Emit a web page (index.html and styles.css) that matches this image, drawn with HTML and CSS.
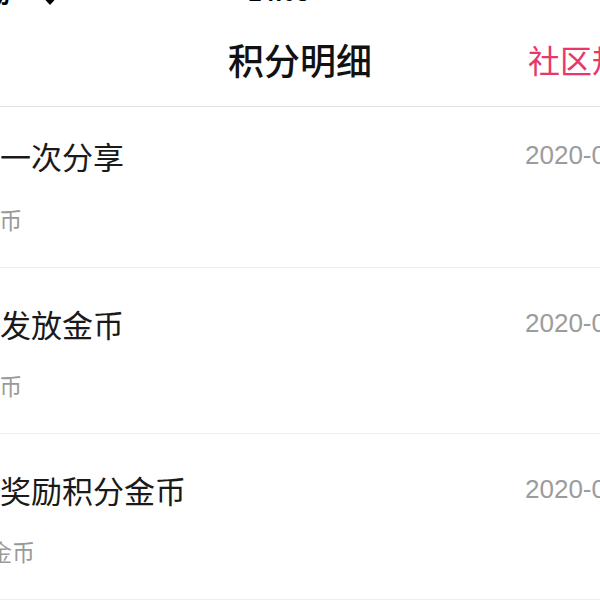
FILE: index.html
```html
<!DOCTYPE html>
<html lang="zh-CN">
<head>
    <meta charset="UTF-8">
    <meta name="viewport" content="width=device-width, initial-scale=1.0">
    <title>积分明细</title>
    <link rel="stylesheet" href="styles.css">
</head>
<body>
    <!-- Barra de estado -->
    <div class="status-bar">
        <span class="carrier">中国移动</span>
        <svg class="wifi" width="20" height="16" viewBox="0 0 20 16">
            <path d="M0 5 A14 14 0 0 1 20 5 L10 16 Z" fill="#000"/>
        </svg>
        <span class="time">14:08</span>
    </div>

    <header class="nav">
        <div></div>
        <h1>积分明细</h1>
        <a class="nav-link" href="#">社区规则</a>
    </header>

    <ul class="records">
        <li class="record">
            <div class="record-info">
                <p class="record-title">完成一次分享</p>
                <p class="record-amount">+10金币</p>
            </div>
            <span class="record-date">2020-06-18</span>
        </li>
        <li class="record">
            <div class="record-info">
                <p class="record-title">系统发放金币</p>
                <p class="record-amount">+10金币</p>
            </div>
            <span class="record-date">2020-06-17</span>
        </li>
        <li class="record">
            <div class="record-info">
                <p class="record-title">签到奖励积分金币</p>
                <p class="record-amount">+100金币</p>
            </div>
            <span class="record-date">2020-06-16</span>
        </li>
    </ul>
</body>
</html>
```

FILE: styles.css
```css
/* General */
body {
    font-family: "Noto Sans CJK SC", "Noto Sans", sans-serif;
    margin: 0;
    padding: 0;
    background: #fff;
    color: #1a1a1a;
    overflow: hidden;
}

/* Barra de estado (casi fuera de la imagen) */
.status-bar {
    display: flex;
    align-items: flex-end;
    height: 30px;
    margin-top: -25px;
    font-size: 24px;
    line-height: 1;
    font-weight: bold;
    color: #000;
}

.carrier {
    margin-left: -86px;
    white-space: nowrap;
}

.wifi {
    margin-left: 30px;
}

.time {
    margin-left: 188px;
    font-family: "Liberation Sans", sans-serif;
}

/* Navegación */
.nav {
    display: grid;
    grid-template-columns: minmax(0, 1fr) auto minmax(0, 1fr);
    align-items: center;
    height: 102px;
    box-sizing: border-box;
    padding-top: 6px;
    border-bottom: 1px solid #e2e2e2;
}

.nav h1 {
    margin: 0;
    font-size: 36px;
    line-height: 1;
    font-weight: 500;
    color: #111;
}

.nav-link {
    justify-self: start;
    margin-left: 156px;
    font-size: 32px;
    line-height: 1;
    color: #e8386a;
    text-decoration: none;
    white-space: nowrap;
}

/* Lista de registros */
.records {
    list-style: none;
    margin: 0 0 0 -62px;
    padding: 0;
    width: 750px;
}

.record {
    display: flex;
    justify-content: space-between;
    align-items: flex-start;
    padding: 40px 30px 36px 0;
    border-bottom: 1px solid #eeeeee;
}

.record:first-child {
    padding-top: 33px;
}

.record-info p {
    margin: 0;
    white-space: nowrap;
}

.record-title {
    font-size: 31px;
    line-height: 31px;
    color: #1a1a1a;
}

.record-amount {
    margin-top: 34px !important;
    font-size: 23px;
    line-height: 24px;
    color: #9a9a9a;
}

.record:first-child .record-amount {
    margin-top: 36px !important;
}

.record-date {
    font-family: "Liberation Sans", sans-serif;
    font-size: 26px;
    line-height: 31px;
    color: #9c9c9c;
}
```
